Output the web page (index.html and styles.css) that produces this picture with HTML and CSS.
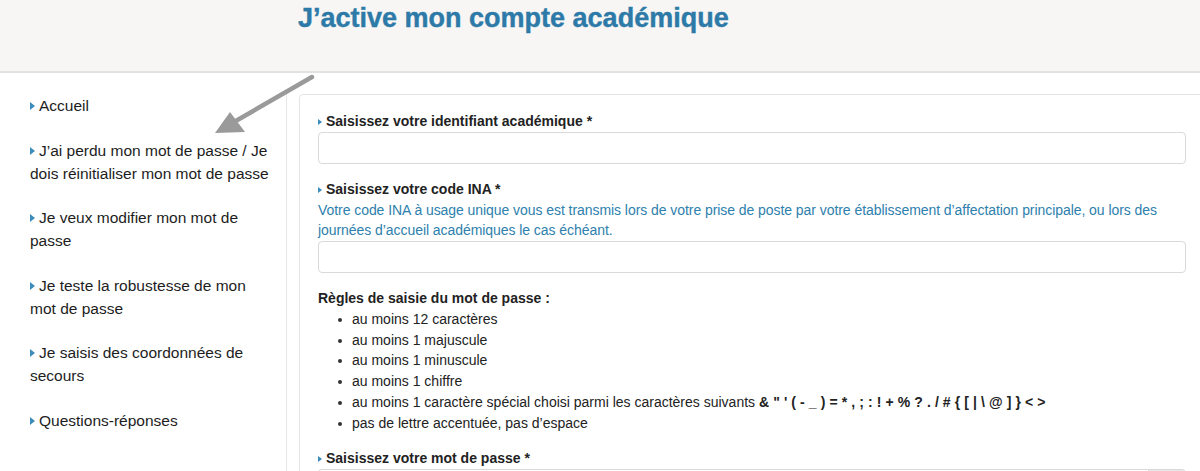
FILE: index.html
```html
<!DOCTYPE html>
<html lang="fr">
<head>
<meta charset="utf-8">
<title>J'active mon compte académique</title>
<link rel="stylesheet" href="styles.css">
</head>
<body>
<header class="header">
  <h1 class="title">J’active mon compte académique</h1>
</header>
<div class="layout">
  <nav class="sidebar">
    <ul class="nav">
      <li><a href="#"><span class="tri"></span>Accueil</a></li>
      <li><a href="#"><span class="tri"></span>J’ai perdu mon mot de passe / Je dois réinitialiser mon mot de passe</a></li>
      <li><a href="#"><span class="tri"></span>Je veux modifier mon mot de passe</a></li>
      <li><a href="#"><span class="tri"></span>Je teste la robustesse de mon mot de passe</a></li>
      <li><a href="#"><span class="tri"></span>Je saisis des coordonnées de secours</a></li>
      <li><a href="#"><span class="tri"></span>Questions-réponses</a></li>
    </ul>
  </nav>
  <main class="main">
    <form class="card">
      <label class="label"><span class="tri"></span>Saisissez votre identifiant académique *</label>
      <div class="input"></div>

      <label class="label gap"><span class="tri"></span>Saisissez votre code INA *</label>
      <p class="help">Votre code INA à usage unique vous est transmis lors de votre prise de poste par votre établissement d’affectation principale, ou lors des journées d’accueil académiques le cas échéant.</p>
      <div class="input"></div>

      <p class="rules-title gap">Règles de saisie du mot de passe :</p>
      <ul class="rules">
        <li>au moins 12 caractères</li>
        <li>au moins 1 majuscule</li>
        <li>au moins 1 minuscule</li>
        <li>au moins 1 chiffre</li>
        <li>au moins 1 caractère spécial choisi parmi les caractères suivants <b>&amp; " ' ( - _ ) = * , ; : ! + % ? . / # { [ | \ @ ] } &lt; &gt;</b></li>
        <li>pas de lettre accentuée, pas d’espace</li>
      </ul>

      <label class="label gap"><span class="tri"></span>Saisissez votre mot de passe *</label>
      <div class="input-group">
        <div class="input flex"></div>
        <div class="addon"></div>
      </div>
    </form>
  </main>
  <svg class="arrow" width="120" height="80" viewBox="0 0 120 80" aria-hidden="true">
    <line x1="110" y1="5" x2="32" y2="50" stroke="#9a9a9a" stroke-width="4.5" stroke-linecap="round"/>
    <polygon points="13,61 28,40 43,60" fill="#9a9a9a"/>
  </svg>
</div>
</body>
</html>
```
FILE: styles.css
```css
* { box-sizing: border-box; }
html, body { margin: 0; padding: 0; }
body {
  font-family: "Liberation Sans", Arial, sans-serif;
  color: #1d1d1d;
  background: #fff;
  width: 1200px;
  height: 471px;
  overflow: hidden;
}
.header {
  height: 73px;
  background: #f7f6f4;
  border-bottom: 2px solid #e3e2e0;
  padding-left: 298px;
}
.title {
  margin: 0;
  padding-top: 1px;
  font-size: 27px;
  line-height: 34px;
  font-weight: 700;
  color: #2d7aa8;
  -webkit-text-stroke: 0.4px #2d7aa8;
}
.layout {
  position: relative;
  display: flex;
  padding-top: 21px;
}
.sidebar {
  width: 287px;
  flex: none;
  border-right: 1px solid #e6e6e6;
  padding: 0 12px 0 30px;
  min-height: 400px;
}
.nav {
  list-style: none;
  margin: 0;
  padding: 0;
}
.nav li {
  font-size: 15.5px;
  line-height: 23px;
  margin-bottom: 21.5px;
}
.nav a {
  color: #1d1d1d;
  text-decoration: none;
}
.tri {
  display: inline-block;
  width: 0;
  height: 0;
  border-top: 4px solid transparent;
  border-bottom: 4px solid transparent;
  border-left: 5px solid #3d8cba;
  margin-right: 4px;
  vertical-align: 1px;
}
.main {
  flex: 1;
  padding-left: 12px;
}
.card {
  width: 906px;
  border: 1px solid #e4e4e4;
  border-radius: 4px;
  padding: 16px 18px 0 18px;
  min-height: 420px;
}
.label {
  display: block;
  font-weight: 700;
  font-size: 14px;
  line-height: 20px;
  color: #222;
  margin-bottom: 1px;
}
.label .tri { border-top-width: 3.5px; border-bottom-width: 3.5px; border-left-width: 4px; }
.gap { margin-top: 15px; }
.input {
  height: 32px;
  border: 1px solid #d9d9d9;
  border-radius: 4px;
  background: #fff;
}
.help {
  margin: 0 0 1px;
  font-size: 14px;
  line-height: 20px;
  letter-spacing: -0.06px;
  color: #2e80ad;
}
.rules-title {
  margin-bottom: 1px;
  font-weight: 700;
  font-size: 14px;
  line-height: 20px;
  color: #222;
}
.rules {
  list-style: none;
  margin: 0;
  padding-left: 34px;
  font-size: 14px;
  line-height: 20.7px;
  color: #222;
}
.rules li { position: relative; }
.rules li::before {
  content: "";
  position: absolute;
  left: -14px;
  top: 9px;
  width: 4px;
  height: 4px;
  border-radius: 50%;
  background: #333;
}
.rules b { font-weight: 700; letter-spacing: 0.1px; }
.input-group {
  display: flex;
  width: 868px;
}
.flex { flex: 1; border-radius: 4px 0 0 4px; border-right: none; }
.addon {
  width: 38px;
  height: 32px;
  background: #e8e8e8;
  border: 1px solid #d9d9d9;
  border-radius: 0 4px 4px 0;
}
.arrow {
  position: absolute;
  left: 202px;
  top: -1px;
}
```
